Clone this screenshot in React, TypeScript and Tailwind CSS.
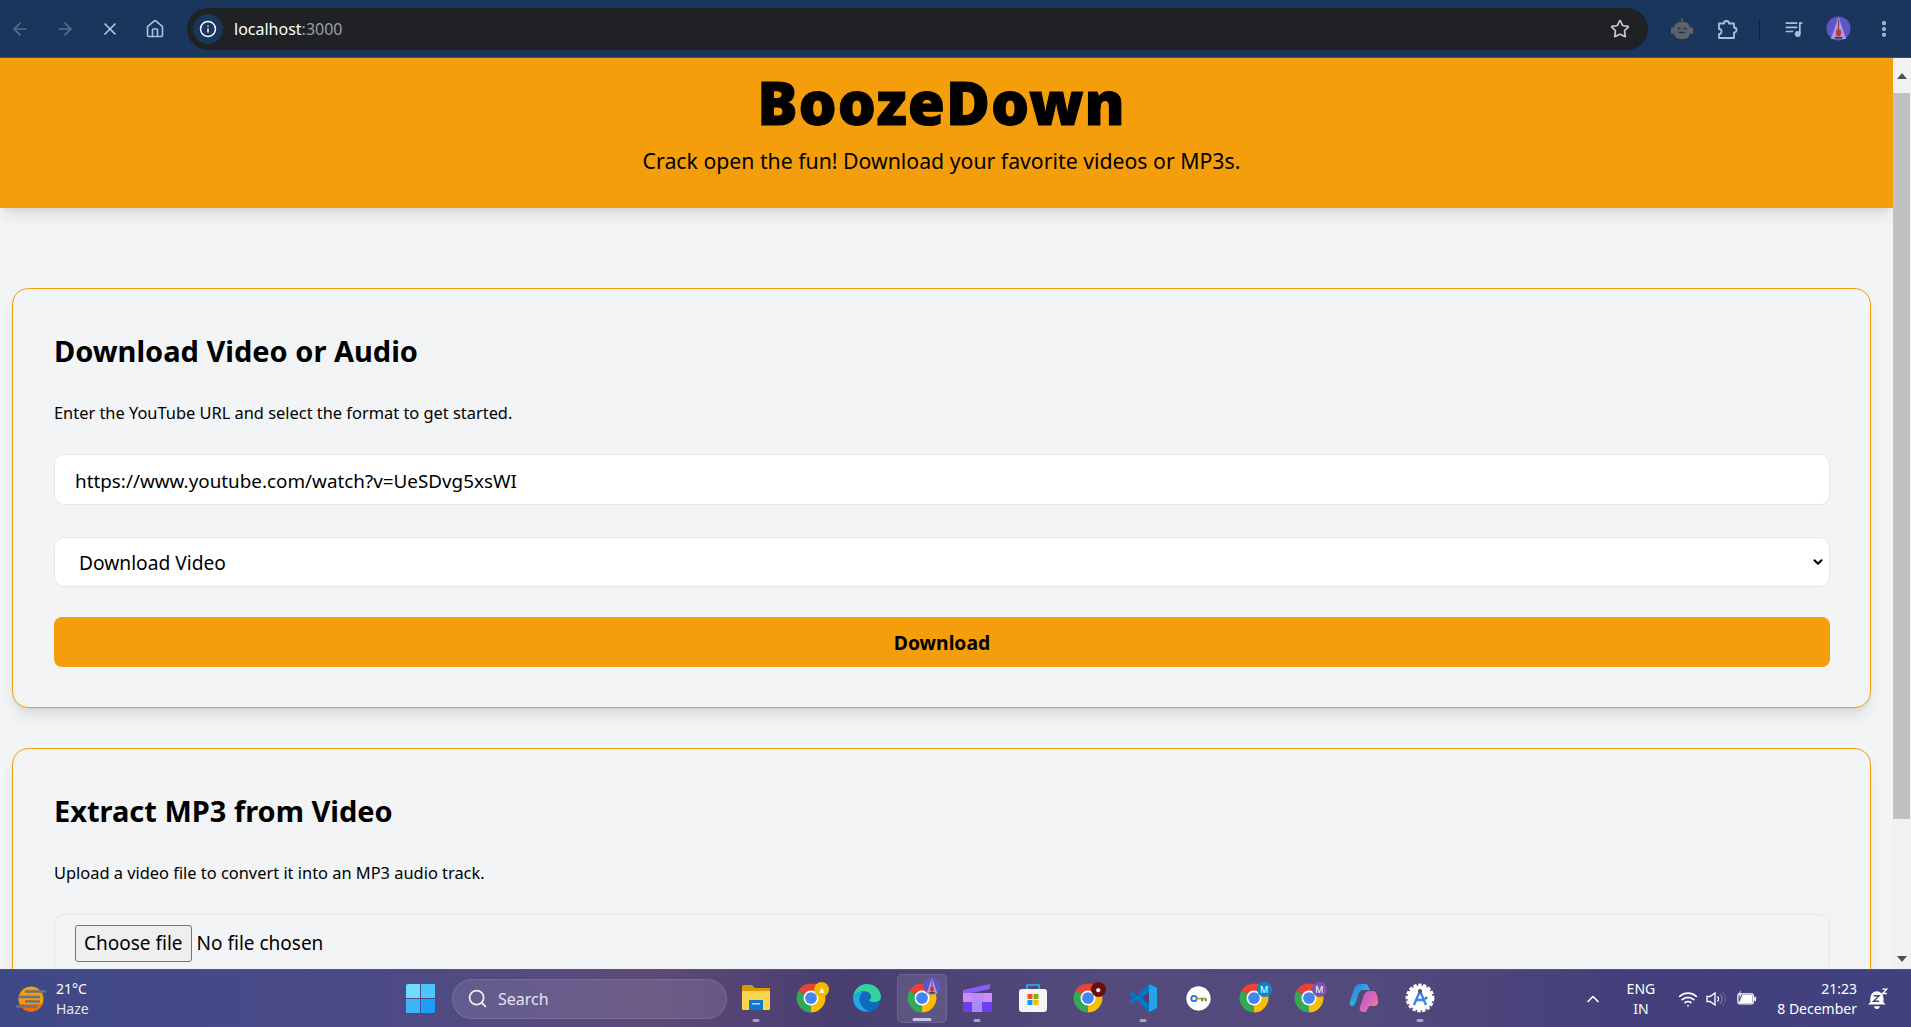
import React from 'react';
import { ArrowLeft, ArrowRight, ChevronDown, ChevronUp, Home, Info, MoreVertical, Search, Star, Wifi, X } from 'lucide-react';

const font = "font-['Noto_Sans','Open_Sans',sans-serif]";

const ChromeIcon: React.FC<{ badge?: React.ReactNode }> = ({ badge }) => (
  <div className="relative w-[30px] h-[30px]">
    <svg viewBox="0 0 24 24" className="w-full h-full">
      <path d="M12 12L2.04 6.25A11.5 11.5 0 0 1 21.96 6.25Z" fill="#ea4335" />
      <path d="M12 12L21.96 6.25A11.5 11.5 0 0 1 12 23.5Z" fill="#fbbc04" />
      <path d="M12 12L12 23.5A11.5 11.5 0 0 1 2.04 6.25Z" fill="#34a853" />
      <circle cx="12" cy="12" r="6" fill="#fff" />
      <circle cx="12" cy="12" r="4.7" fill="#4285f4" />
    </svg>
    {badge}
  </div>
);

const Badge: React.FC<{ color: string; label?: string; children?: React.ReactNode }> = ({ color, label, children }) => (
  <span
    className="absolute -top-[1px] -right-[3px] w-[15px] h-[15px] rounded-full flex items-center justify-center text-[9px] text-white"
    style={{ backgroundColor: color }}
  >
    {label}
    {children}
  </span>
);

const Avatar: React.FC<{ className?: string }> = ({ className }) => (
  <svg viewBox="0 0 26 26" className={className}>
    <circle cx="13" cy="13" r="12.5" fill="#5f55c4" />
    <path d="M13 1L21 24H5Z" fill="#a59be6" />
    <rect x="12.4" y="4" width="1.2" height="11" fill="#8a3b3b" />
    <path d="M11 14h4l.8 3-.8 4h-4l-.6-4Z" fill="#c9302c" />
    <rect x="9" y="22" width="8" height="1.4" fill="#222" />
  </svg>
);

const Folder = () => (
  <svg viewBox="0 0 30 30" className="w-[30px] h-[30px]">
    <path d="M1 4a2 2 0 0 1 2-2h8l3 3h14a1 1 0 0 1 1 1v3H1Z" fill="#d99a06" />
    <path d="M1 8h28v18a1 1 0 0 1-1 1H2a1 1 0 0 1-1-1Z" fill="#fcd34d" />
    <path d="M8 18a1 1 0 0 1 1-1h12a1 1 0 0 1 1 1v9H8Z" fill="#0f79c9" />
    <rect x="11" y="20" width="8" height="1.6" fill="#9fd4f5" />
  </svg>
);

const Edge = () => (
  <svg viewBox="0 0 30 30" className="w-[30px] h-[30px]">
    <circle cx="15" cy="15" r="14" fill="#0f6cbd" />
    <path d="M1 15C2 6 8 1 15 1c8 0 14 6 14 13 0 3-3 5-7 5-3 0-5-1-5-2 3-1 3-6-1-8C10 7 4 9 1 15Z" fill="#34d399" />
    <path d="M1 15C3 10 7 8 11 9c-4 3-5 9-1 14 2 3 5 5 8 5-9 2-17-4-17-13Z" fill="#22a7e8" />
  </svg>
);

const Clapper = () => (
  <svg viewBox="0 0 30 30" className="w-[30px] h-[30px]">
    <path d="M1 7L28 1v5L1 12Z" fill="#8b5cf6" />
    <path d="M1 10h29v9H1Z" fill="#d08cfa" />
    <path d="M1 19h29v9a1 1 0 0 1-1 1H2a1 1 0 0 1-1-1Z" fill="#6d3df0" />
    <path d="M10 19h10v10H10Z" fill="#a78bfa" />
    <path d="M10 10h12v9H10Z" fill="#b98af6" />
  </svg>
);

const Store = () => (
  <svg viewBox="0 0 30 30" className="w-[30px] h-[30px]">
    <path d="M9 6V2h12v4" fill="none" stroke="#22b8ee" strokeWidth="1.6" />
    <rect x="1" y="6" width="28" height="23" rx="3" fill="#f5f5f5" />
    <rect x="9.5" y="11" width="5" height="5" fill="#f25022" />
    <rect x="15.5" y="11" width="5" height="5" fill="#7fba00" />
    <rect x="9.5" y="17" width="5" height="5" fill="#00a4ef" />
    <rect x="15.5" y="17" width="5" height="5" fill="#ffb900" />
  </svg>
);

const VsCode = () => (
  <svg viewBox="0 0 30 30" className="w-[30px] h-[30px]">
    <path d="M21 1l8 4v20l-8 4L9 17l-5 4-3-2 5-4-5-4 3-2 5 4Z" fill="#0078c8" />
    <path d="M21 1l8 4v20l-8 4Z" fill="#22a5ea" />
    <path d="M21 9l-7 6 7 6Z" fill="#4b3f78" />
  </svg>
);

const KeyApp = () => (
  <svg viewBox="0 0 30 30" className="w-[27px] h-[27px]">
    <circle cx="15" cy="15" r="13.5" fill="#fff" />
    <circle cx="10" cy="15" r="3" fill="none" stroke="#2a6fdb" strokeWidth="2" />
    <path d="M13 15h10" stroke="#d9a300" strokeWidth="2" />
    <path d="M19 15v3M23 15v3" stroke="#3a8f3a" strokeWidth="2" />
  </svg>
);

const Copilot = () => (
  <svg viewBox="0 0 30 30" className="w-[30px] h-[30px]">
    <defs>
      <linearGradient id="cpA" x1="0" y1="0" x2="1" y2="1">
        <stop offset="0" stopColor="#2f6bf0" />
        <stop offset="0.6" stopColor="#2fb5d8" />
        <stop offset="1" stopColor="#e8d24a" />
      </linearGradient>
      <linearGradient id="cpB" x1="0" y1="0" x2="1" y2="1">
        <stop offset="0" stopColor="#b455e0" />
        <stop offset="0.6" stopColor="#e06ab0" />
        <stop offset="1" stopColor="#f59c5a" />
      </linearGradient>
    </defs>
    <path d="M12 1h6l3 6H14c-3 0-4 2-5 5l-3 9c-.6 1.5-2 2-3 2-2 0-3-2-2-5l4-12c1-3 3-5 7-5Z" fill="url(#cpA)" />
    <path d="M24 8c2 0 3 1 4 4l1 6c.5 3-1 5-4 5h-5l-3 6h-3c-3 0-4-3-3-5l3-9c1-4 3-7 6-7Z" fill="url(#cpB)" />
  </svg>
);

const Compass = () => (
  <svg viewBox="0 0 30 30" className="w-[30px] h-[30px]">
    <circle cx="15" cy="15" r="12.5" fill="#fff" />
    <circle cx="15" cy="15" r="13.2" fill="none" stroke="#fff" strokeWidth="2.4" strokeDasharray="3.4 1.6" />
    <path d="M15 8l-6 14M15 8l6 14M10 17h10" fill="none" stroke="#3b82f6" strokeWidth="2.4" />
    <circle cx="15" cy="8" r="2" fill="#4b5563" />
    <circle cx="21" cy="15" r="1.5" fill="#3a8f3a" />
  </svg>
);

const Sun = () => (
  <svg viewBox="0 0 30 26" className="w-[30px] h-[26px]">
    <circle cx="15" cy="13" r="12.5" fill="#f59e0b" />
    <path d="M3.5 18h23A12.5 12.5 0 0 1 15 25.5 12.5 12.5 0 0 1 3.5 18Z" fill="#ea6d0a" />
    <path d="M9 5.5h21M2 11h22M9 15.5h15M0 20.5h21" stroke="#6b7280" strokeWidth="2.4" />
  </svg>
);

const Robot = () => (
  <svg viewBox="0 0 24 24" className="w-[24px] h-[24px]">
    <rect x="11.2" y="1" width="1.6" height="4" fill="#5f6368" />
    <rect x="4" y="5" width="16" height="17" rx="6" fill="#5f6368" />
    <rect x="1" y="10" width="3" height="7" rx="1.5" fill="#5f6368" />
    <rect x="20" y="10" width="3" height="7" rx="1.5" fill="#5f6368" />
    <path d="M7.5 11.5h3M13.5 11.5h3" stroke="#1a365d" strokeWidth="1.6" />
    <path d="M9 15.5h6" stroke="#1a365d" strokeWidth="1.6" />
  </svg>
);

const ExtensionPiece = () => (
  <svg viewBox="0 0 24 24" className="w-[24px] h-[24px]" fill="none" stroke="#a8c0e0" strokeWidth="1.8" strokeLinejoin="round">
    <path d="M4 6.5h5a2.5 2.5 0 0 1 5 0h5v4a2.5 2.5 0 0 1 0 5V21H4v-4a2.5 2.5 0 0 0 0-5Z" />
  </svg>
);

const MediaQueue = () => (
  <svg viewBox="0 0 24 24" className="w-[20px] h-[20px] text-[#a8c0e0]" fill="none" stroke="currentColor" strokeWidth="2">
    <path d="M2 5h14M2 10h14M2 15h9" />
    <circle cx="16.5" cy="18" r="2.5" fill="currentColor" />
    <path d="M19 18V5h3" />
  </svg>
);

const Speaker = () => (
  <svg viewBox="0 0 22 18" className="w-[22px] h-[18px]" fill="none" stroke="#fff" strokeWidth="1.3">
    <path d="M2 6.5h3L10 3v12l-5-3.5H2Z" />
    <path d="M12.5 6.5a3.5 3.5 0 0 1 0 5" />
    <path d="M15 4a7 7 0 0 1 0 10" stroke="#8f8ab0" strokeWidth="1" />
    <path d="M17.5 2a10 10 0 0 1 0 14" stroke="#6a6698" strokeWidth="1" />
  </svg>
);

const Battery = () => (
  <svg viewBox="0 0 22 16" className="w-[20px] h-[15px]" fill="none">
    <rect x="1" y="3" width="17" height="11" rx="2" stroke="#fff" strokeWidth="1.4" />
    <path d="M2 13L6 4h11v9Z" fill="#fff" />
    <rect x="19" y="6" width="2" height="5" rx="1" fill="#fff" />
    <path d="M4 0L1.5 4h3L3 7" stroke="#fff" strokeWidth="1" />
  </svg>
);

const Bell = () => (
  <svg viewBox="0 0 20 20" className="w-[22px] h-[22px]">
    <path d="M9 3a6 6 0 0 1 6 6v4l2 2H1l2-2V9a6 6 0 0 1 6-6Z" fill="#fff" />
    <path d="M6.5 16.5h5a2.5 2.5 0 0 1-5 0Z" fill="#fff" />
    <path d="M6 7h5l-5 5h5" fill="none" stroke="#47427f" strokeWidth="1.3" />
    <path d="M14 1h4l-4 4h4" fill="none" stroke="#fff" strokeWidth="1.2" />
  </svg>
);

const TaskIcon: React.FC<{ dot?: 'open' | 'active'; active?: boolean; children: React.ReactNode }> = ({ dot, active, children }) => (
  <div className={`relative w-[50px] h-[49px] mx-[2.65px] flex items-center justify-center rounded-[5px] ${active ? 'bg-white/10 border border-white/10' : ''}`}>
    <div className="-mt-[1px]">{children}</div>
    {dot && (
      <span className={`absolute bottom-[1px] h-[3px] rounded-full left-1/2 -translate-x-1/2 ${dot === 'active' ? 'w-[19px] bg-[#c8c3e8]' : 'w-[7px] bg-[#a9a5c0]'}`} />
    )}
  </div>
);

const Card: React.FC<{ title: string; desc: string; children: React.ReactNode }> = ({ title, desc, children }) => (
  <section className="border border-[#f59e0b] rounded-[16px] shadow-lg pl-[41px] pr-[40px] pt-[42px] pb-[40px] bg-[#f3f4f6]">
    <h2 className="text-[29px] leading-[40px] font-bold text-black">{title}</h2>
    <p className="text-[16.4px] leading-[28px] text-black mt-[28px]">{desc}</p>
    {children}
  </section>
);

const App: React.FC = () => {
  return (
    <div className={`h-screen flex flex-col overflow-hidden bg-[#f3f4f6] ${font}`}>
      {/* browser toolbar */}
      <div className="h-[58px] shrink-0 bg-[#1a365d] flex items-center border-b border-[#3a5272]">
        <div className="w-[187px] shrink-0 flex items-center">
          <div className="w-[45px] flex justify-center -ml-[3px]"><ArrowLeft size={20} className="text-[#56708f]" /></div>
          <div className="w-[45px] flex justify-center"><ArrowRight size={20} className="text-[#56708f]" /></div>
          <div className="w-[45px] flex justify-center"><X size={20} className="text-[#b8cbe4]" /></div>
          <div className="w-[45px] flex justify-center"><Home size={20} className="text-[#a8c0e0]" /></div>
        </div>
        <div className="w-[1461px] h-[42px] rounded-full bg-[#202124] flex items-center pl-[6px] pr-[18px] shrink-0">
          <span className="w-[30px] h-[30px] rounded-full bg-[#1a365d] flex items-center justify-center">
            <Info size={18} className="text-white" />
          </span>
          <span className="ml-[11px] text-[16px] text-white">localhost<span className="text-[#9aa0a6]">:3000</span></span>
          <Star size={20} className="ml-auto text-[#c9cacc]" />
        </div>
        <div className="flex-1 flex items-center">
          <div className="w-[22px]" />
          <Robot />
          <div className="ml-[21px]"><ExtensionPiece /></div>
          <div className="w-[1px] h-[20px] bg-[#0d2240] ml-[20px]" />
          <div className="ml-[24px]"><MediaQueue /></div>
          <Avatar className="w-[25px] h-[25px] ml-[22px]" />
          <MoreVertical size={20} strokeWidth={3} className="text-[#a8c0e0] ml-[23px]" />
        </div>
      </div>

      {/* page + scrollbar */}
      <div className="flex-1 min-h-0 flex">
        <main className="flex-1 min-w-0 overflow-hidden">
          <header className="relative h-[150px] bg-[#f59e0b] shadow-lg flex flex-col items-center pr-[10px]">
            <h1 className="mt-[8px] text-[60px] leading-[72px] font-black tracking-[1px] text-black [-webkit-text-stroke:1px_black]">BoozeDown</h1>
            <p className="mt-[7px] text-[21.25px] leading-[32px] text-black">Crack open the fun! Download your favorite videos or MP3s.</p>
          </header>
          <div className="pt-[80px] pl-[12px] pr-[22px] flex flex-col gap-[40px]">
            <Card title="Download Video or Audio" desc="Enter the YouTube URL and select the format to get started.">
              <input
                readOnly
                value="https://www.youtube.com/watch?v=UeSDvg5xsWI"
                className="mt-[27px] w-full h-[51px] px-[20px] pt-[2px] bg-white border border-[#e5e7eb] rounded-[10px] text-[18.85px] text-black outline-none"
              />
              <div className="relative mt-[32px]">
                <select className="appearance-none w-full h-[50px] pl-[24px] pr-[20px] pt-[2px] bg-white border border-[#e5e7eb] rounded-[10px] text-[19.2px] text-black outline-none">
                  <option>Download Video</option>
                  <option>Download MP3</option>
                </select>
                <ChevronDown size={14} strokeWidth={3.5} className="absolute right-[5px] top-[18px] text-black" />
              </div>
              <button className="mt-[30px] w-full h-[50px] pt-[2px] bg-[#f59e0b] rounded-[8px] text-[19.3px] font-bold text-black">Download</button>
            </Card>
            <Card title="Extract MP3 from Video" desc="Upload a video file to convert it into an MP3 audio track.">
              <div className="mt-[27px] h-[58px] px-[20px] border border-[#e5e7eb] rounded-[10px] flex items-center text-[19px] text-black">
                <button className="h-[37px] px-[8px] bg-[#efefef] border border-[#767676] rounded-[3px]">Choose file</button>
                <span className="ml-[5px]">No file chosen</span>
              </div>
            </Card>
          </div>
        </main>
        <div className="w-[18px] shrink-0 bg-[#f1f1f1] flex flex-col items-center">
          <div className="h-[35px] flex items-center justify-center"><span className="w-0 h-0 border-x-[5px] border-x-transparent border-b-[6px] border-b-[#505050]" /></div>
          <div className="w-full h-[726px] bg-[#c1c1c1] border-r border-[#f1f1f1]" />
          <div className="flex-1 flex items-end justify-center pb-[7px]"><span className="w-0 h-0 border-x-[5px] border-x-transparent border-t-[6px] border-t-[#505050]" /></div>
        </div>
      </div>

      {/* windows taskbar */}
      <footer className="h-[58px] shrink-0 flex items-center border-t border-[#55536f] text-white bg-[linear-gradient(90deg,#3e4886_0%,#4a4a88_18%,#5d4a79_34%,#483e70_44%,#544a7c_58%,#524a7b_72%,#443f7c_85%,#41417f_100%)]">
        <div className="w-[406px] shrink-0 flex items-center pl-[16px]">
          <Sun />
          <div className="ml-[10px] text-[14px] leading-[20px]">
            <div>21°C</div>
            <div className="text-[#e6e4f0]">Haze</div>
          </div>
        </div>
        <div className="grid grid-cols-2 gap-[1px] w-[29px] h-[29px] shrink-0">
          <span className="bg-[#6fdcfb] rounded-tl-[2px]" />
          <span className="bg-[#4cc6fa]" />
          <span className="bg-[#3bb4f8]" />
          <span className="bg-[#1e9dfa] rounded-br-[2px]" />
        </div>
        <div className="ml-[17px] w-[275px] h-[40px] rounded-full bg-white/10 border border-white/10 flex items-center pl-[14px] text-[16px] shrink-0">
          <Search size={21} className="text-[#eeeeee]" />
          <span className="ml-[10px] text-[#e6e4f0]">Search</span>
        </div>
        <div className="ml-[1.5px] flex items-center shrink-0">
          <TaskIcon dot="open"><Folder /></TaskIcon>
          <TaskIcon><ChromeIcon badge={<Badge color="#f5b800" label="▲" />} /></TaskIcon>
          <TaskIcon><Edge /></TaskIcon>
          <TaskIcon active dot="active"><ChromeIcon badge={<span className="absolute -top-[9px] -right-[4px]"><Avatar className="w-[18px] h-[24px]" /></span>} /></TaskIcon>
          <TaskIcon dot="open"><Clapper /></TaskIcon>
          <TaskIcon><Store /></TaskIcon>
          <TaskIcon><ChromeIcon badge={<Badge color="#6b0f0f" label="●" />} /></TaskIcon>
          <TaskIcon dot="open"><VsCode /></TaskIcon>
          <TaskIcon><KeyApp /></TaskIcon>
          <TaskIcon><ChromeIcon badge={<Badge color="#0c87c9" label="M" />} /></TaskIcon>
          <TaskIcon><ChromeIcon badge={<Badge color="#7a55b8" label="M" />} /></TaskIcon>
          <TaskIcon><Copilot /></TaskIcon>
          <TaskIcon dot="open"><Compass /></TaskIcon>
        </div>
        <div className="flex-1 flex items-center justify-end pr-[22px]">
          <ChevronUp size={20} className="text-white mr-[24px]" />
          <div className="text-[14px] leading-[20px] text-center mr-[23px]">
            <div>ENG</div>
            <div>IN</div>
          </div>
          <Wifi size={20} className="mr-[7px]" />
          <Speaker />
          <div className="ml-[10px]"><Battery /></div>
          <div className="ml-[20px] text-[14px] leading-[20px] text-right">
            <div>21:23</div>
            <div>8 December</div>
          </div>
          <div className="ml-[10px]"><Bell /></div>
        </div>
      </footer>
    </div>
  );
};

export default App;
